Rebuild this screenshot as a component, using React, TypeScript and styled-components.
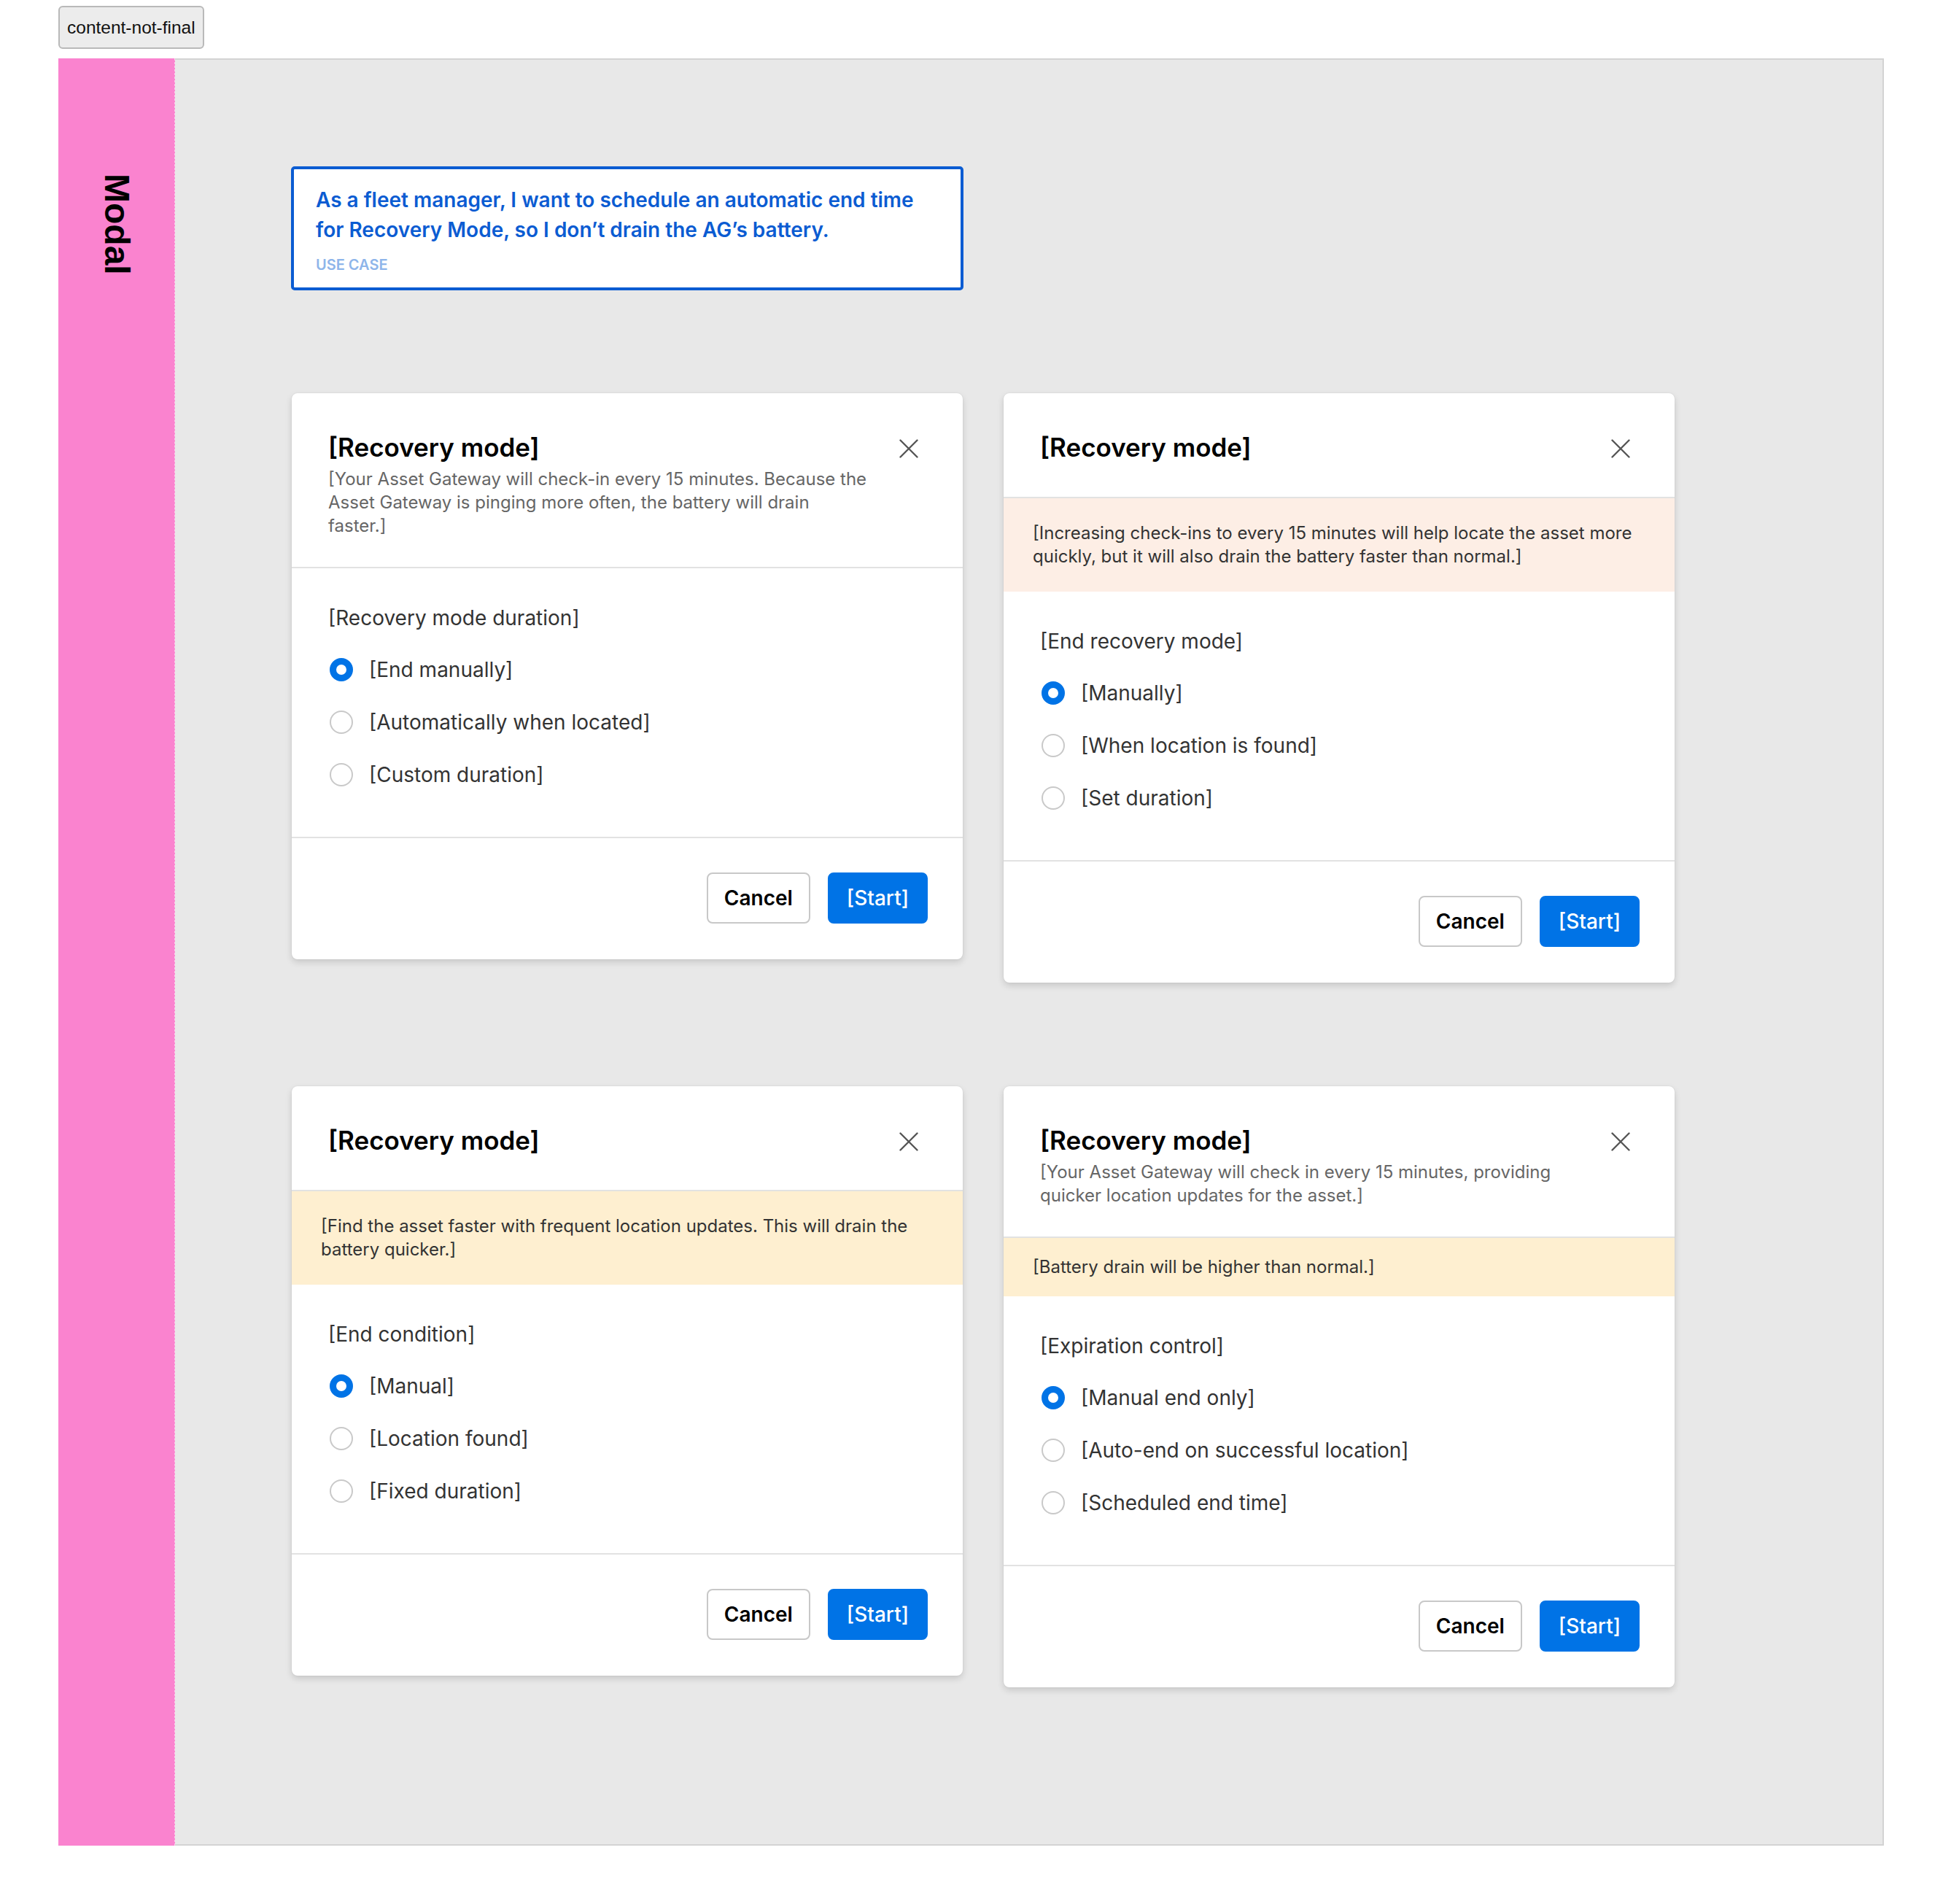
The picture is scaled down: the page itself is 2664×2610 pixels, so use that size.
import React from "react";
import styled, { createGlobalStyle } from "styled-components";

const GlobalStyle = createGlobalStyle`
  html, body { margin: 0; padding: 0; background: #ffffff; }
  body { font-family: Inter, "Noto Sans", sans-serif; -webkit-font-smoothing: antialiased; }
  * { box-sizing: border-box; }
`;

const Page = styled.div`
  padding: 8px 0 80px 80px;
  width: 2664px;
`;

const Tag = styled.div`
  display: inline-flex;
  align-items: center;
  height: 59px;
  padding: 0 10px;
  border: 2px solid #b9b9b9;
  border-radius: 6px;
  background: #ececec;
  font-family: "Liberation Sans", Arial, sans-serif;
  font-size: 24.5px;
  color: #111;
`;

const Frame = styled.div`
  margin-top: 13px;
  display: flex;
  width: 2503px;
  height: 2450px;
`;

const Side = styled.div`
  width: 160px;
  flex: none;
  background: #fa83cf;
  border-right: 1px dashed rgba(255, 255, 255, 0.55);
  display: flex;
  justify-content: center;
  padding-top: 158px;
`;

const SideTitle = styled.div`
  writing-mode: vertical-rl;
  font-family: "Liberation Sans", Arial, sans-serif;
  font-weight: 700;
  font-size: 48px;
  line-height: 1;
  color: #000;
`;

const Main = styled.div`
  flex: 1;
  background: #e8e8e8;
  border: 2px solid #d3d3d3;
  border-left: none;
  padding: 146px 0 0 160px;
  display: flex;
  flex-direction: column;
  gap: 141px;
`;

const UseCase = styled.div`
  width: 922px;
  margin-left: -1px;
  background: #fff;
  border: 4px solid #0b5cd2;
  border-radius: 5px;
  padding: 22px 30px 19px;
`;

const UseCaseText = styled.div`
  font-size: 28px;
  line-height: 41px;
  font-weight: 600;
  color: #0b5cd2;
`;

const UseCaseLabel = styled.div`
  margin-top: 15px;
  font-size: 20px;
  line-height: 24px;
  font-weight: 600;
  color: #8eb5ea;
`;

const Grid = styled.div`
  display: grid;
  grid-template-columns: 920px 920px;
  column-gap: 56px;
  row-gap: 142px;
  align-items: start;
`;

const Card = styled.div`
  background: #fff;
  border-radius: 8px;
  box-shadow: 0 4px 10px rgba(0, 0, 0, 0.14), 0 0 2px rgba(0, 0, 0, 0.08);
  overflow: hidden;
`;

const Header = styled.div`
  display: flex;
  align-items: flex-start;
  gap: 24px;
  padding: 50px 48px 40px 50px;
  border-bottom: 2px solid #e2e2e2;
`;

const HeaderText = styled.div`
  flex: 1;
  min-width: 0;
`;

const Title = styled.div`
  font-size: 35px;
  line-height: 48px;
  font-weight: 600;
  color: #000;
`;

const Desc = styled.div`
  margin-top: 4px;
  max-width: 741px;
  font-size: 24px;
  line-height: 32px;
  color: #666;
`;

const CloseButton = styled.button`
  flex: none;
  width: 52px;
  height: 52px;
  border: none;
  background: transparent;
  padding: 0;
  display: flex;
  align-items: center;
  justify-content: center;
  cursor: pointer;
`;

const Alert = styled.div<{ $tone: "peach" | "yellow"; $compact?: boolean }>`
  background: ${(p) => (p.$tone === "peach" ? "#fdeee5" : "#feefd0")};
  padding: ${(p) => (p.$compact ? "24px 40px" : "32px 40px")};
  font-size: 24px;
  line-height: 32px;
  color: #333;
`;

const Body = styled.div`
  display: flex;
  flex-direction: column;
  gap: 30px;
  padding: 48px 50px 64px;
  border-bottom: 2px solid #e2e2e2;
`;

const FieldLabel = styled.div`
  font-size: 28px;
  line-height: 40px;
  color: #333;
`;

const Option = styled.label`
  display: flex;
  align-items: center;
  gap: 22px;
  height: 42px;
  font-size: 28px;
  color: #333;
  cursor: pointer;
`;

const Radio = styled.span<{ $checked?: boolean }>`
  flex: none;
  width: 32px;
  height: 32px;
  margin-left: 2px;
  border-radius: 50%;
  background: #fff;
  border: ${(p) => (p.$checked ? "9px solid #0073e6" : "2px solid #c9c9c9")};
`;

const Footer = styled.div`
  display: flex;
  justify-content: flex-end;
  gap: 24px;
  padding: 47px 48px 49px;
`;

const Button = styled.button<{ $primary?: boolean }>`
  height: 70px;
  padding: ${(p) => (p.$primary ? "0 24px" : "0 22px")};
  border-radius: 8px;
  font-family: Inter, sans-serif;
  font-size: 28px;
  cursor: pointer;
  border: 2px solid ${(p) => (p.$primary ? "#0073e6" : "#c8c8c8")};
  background: ${(p) => (p.$primary ? "#0073e6" : "#fff")};
  color: ${(p) => (p.$primary ? "#fff" : "#000")};
  font-weight: ${(p) => (p.$primary ? 500 : 600)};
`;

const CloseIcon = () => (
  <svg width="26" height="26" viewBox="0 0 26 26" fill="none">
    <path d="M1.5 1.5 L24.5 24.5 M24.5 1.5 L1.5 24.5" stroke="#555" strokeWidth="2.4" strokeLinecap="round" />
  </svg>
);

type ModalData = {
  desc?: string;
  alert?: { tone: "peach" | "yellow"; text: string; compact?: boolean };
  label: string;
  options: string[];
};

const modals: ModalData[] = [
  {
    desc: "[Your Asset Gateway will check-in every 15 minutes. Because the Asset Gateway is pinging more often, the battery will drain faster.]",
    label: "[Recovery mode duration]",
    options: ["[End manually]", "[Automatically when located]", "[Custom duration]"],
  },
  {
    alert: {
      tone: "peach",
      text: "[Increasing check-ins to every 15 minutes will help locate the asset more quickly, but it will also drain the battery faster than normal.]",
    },
    label: "[End recovery mode]",
    options: ["[Manually]", "[When location is found]", "[Set duration]"],
  },
  {
    alert: {
      tone: "yellow",
      text: "[Find the asset faster with frequent location updates. This will drain the battery quicker.]",
    },
    label: "[End condition]",
    options: ["[Manual]", "[Location found]", "[Fixed duration]"],
  },
  {
    desc: "[Your Asset Gateway will check in every 15 minutes, providing quicker location updates for the asset.]",
    alert: { tone: "yellow", text: "[Battery drain will be higher than normal.]", compact: true },
    label: "[Expiration control]",
    options: ["[Manual end only]", "[Auto-end on successful location]", "[Scheduled end time]"],
  },
];

const Modal = ({ data }: { data: ModalData }) => (
  <Card>
    <Header>
      <HeaderText>
        <Title>[Recovery mode]</Title>
        {data.desc && <Desc>{data.desc}</Desc>}
      </HeaderText>
      <CloseButton aria-label="Close">
        <CloseIcon />
      </CloseButton>
    </Header>
    {data.alert && (
      <Alert $tone={data.alert.tone} $compact={data.alert.compact}>
        {data.alert.text}
      </Alert>
    )}
    <Body>
      <FieldLabel>{data.label}</FieldLabel>
      {data.options.map((o, i) => (
        <Option key={o}>
          <Radio $checked={i === 0} />
          {o}
        </Option>
      ))}
    </Body>
    <Footer>
      <Button>Cancel</Button>
      <Button $primary>[Start]</Button>
    </Footer>
  </Card>
);

export default function App() {
  return (
    <Page>
      <GlobalStyle />
      <Tag>content-not-final</Tag>
      <Frame>
        <Side>
          <SideTitle>Modal</SideTitle>
        </Side>
        <Main>
          <UseCase>
            <UseCaseText>
              As a fleet manager, I want to schedule an automatic end time for Recovery Mode, so I don’t drain the AG’s battery.
            </UseCaseText>
            <UseCaseLabel>USE CASE</UseCaseLabel>
          </UseCase>
          <Grid>
            {modals.map((m, i) => (
              <Modal key={i} data={m} />
            ))}
          </Grid>
        </Main>
      </Frame>
    </Page>
  );
}
